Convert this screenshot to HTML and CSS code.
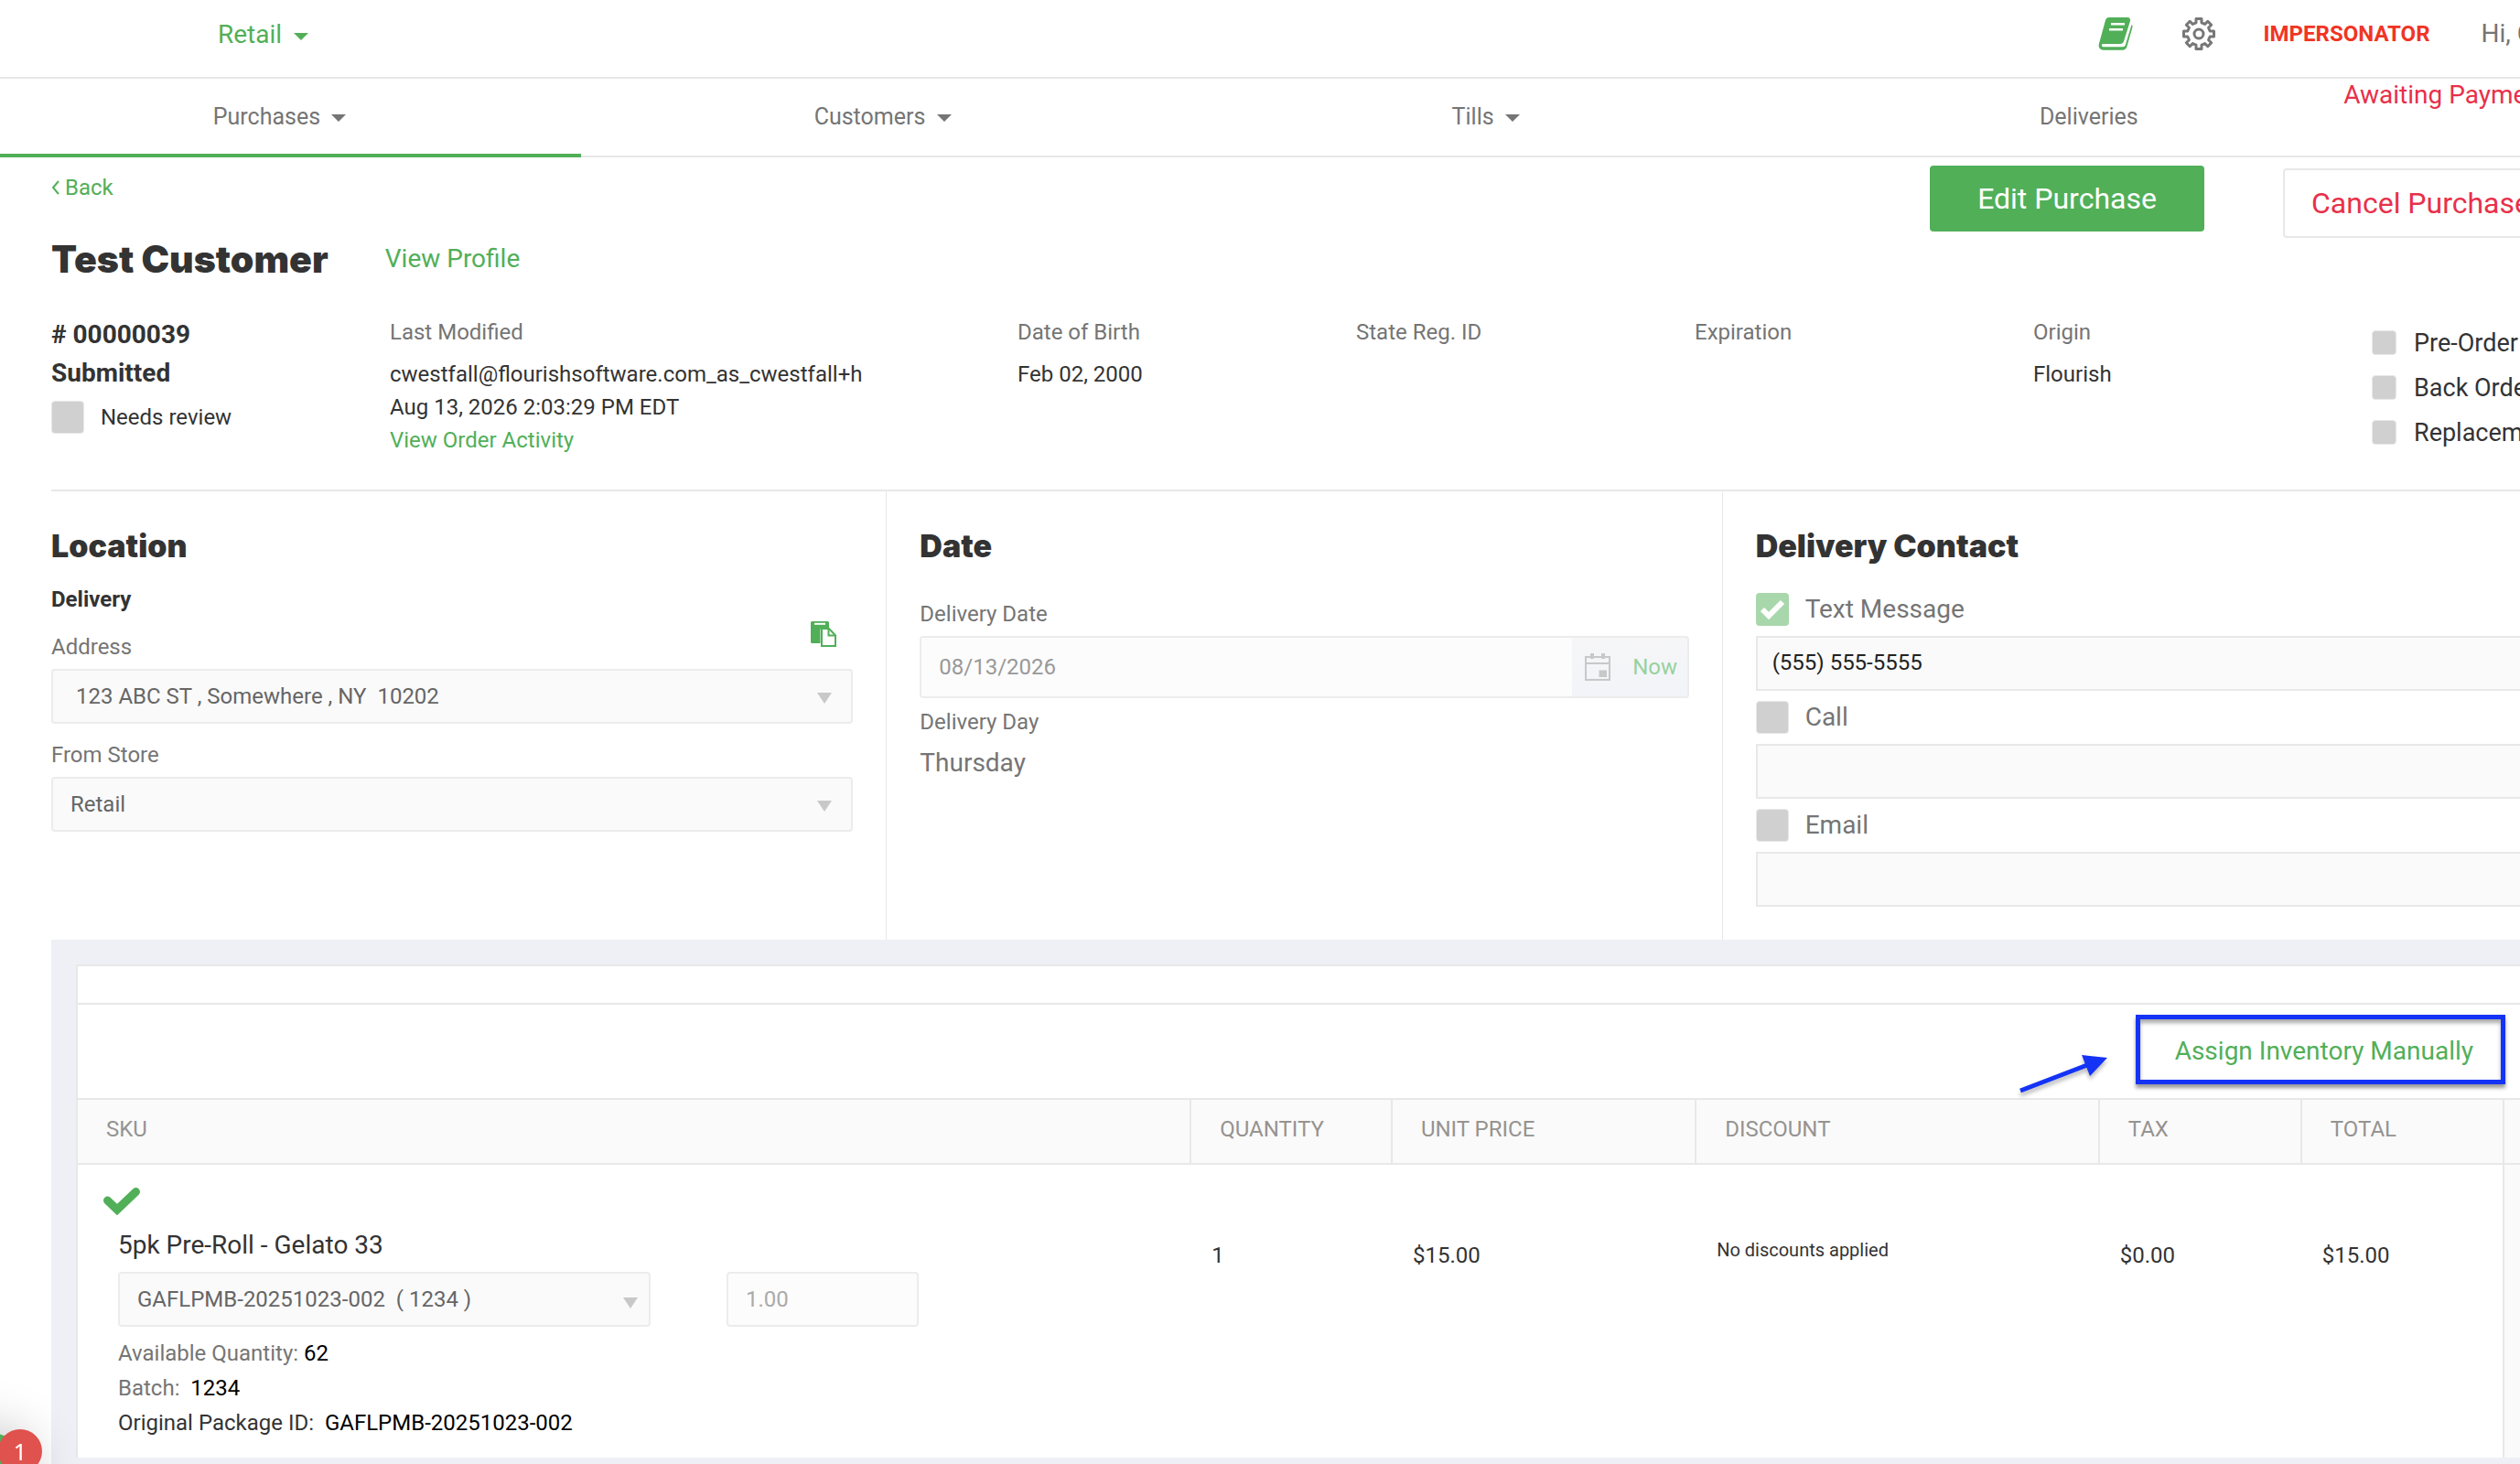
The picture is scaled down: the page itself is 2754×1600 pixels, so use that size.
FILE: index.html
```html
<!DOCTYPE html>
<html lang="en">
<head>
<meta charset="utf-8">
<title>Purchase 00000039</title>
<link rel="stylesheet" href="styles.css">
</head>
<body>
<div class="page">
  <header class="topbar">
    <button class="store-switch" type="button">Retail <span class="caret"></span></button>
    <div class="topbar-right">
      <a href="#" class="book-link" aria-label="Knowledge base">
        <svg width="40" height="38" viewBox="0 0 40 38"><path fill="#51af58" d="M13 1h20c2.500 0 3.500 2 3 4l-7 22c-.6 2-2 3-4 3H7c-1.500 0-2.500.6-2 2 .3 1 1.200 1.200 2 1.200h21c1.400 0 2.400-.8 2.800-2L37.500 9c1 .8 1.300 1.600.9 3l-6 21c-.7 2.400-2.400 3.800-5 3.800H7c-4 0-6-3-5.200-6.500L9 4c.6-2 2-3 4-3z"/><path stroke="#fff" stroke-width="2.400" d="M15 8.200h15M13 14.200h15"/></svg>
      </a>
      <a href="#" class="gear-link" aria-label="Settings">
        <svg width="36" height="36" viewBox="0 0 36 36" fill="none" stroke="#777" stroke-width="3" stroke-linejoin="round"><path d="M15 1.500h6v4.300l3.700 1.600 3.100-3.100 3.900 3.900-3.100 3.100 1.600 3.700h4.300v6h-4.300l-1.600 3.700 3.100 3.100-3.900 3.900-3.100-3.100-3.700 1.600v4.300h-6v-4.300l-3.700-1.600-3.100 3.100-3.900-3.900 3.100-3.100-1.600-3.700H1.500v-6h4.300l1.600-3.700-3.100-3.100 3.900-3.900 3.100 3.100 3.700-1.600z"/><circle cx="18" cy="18" r="5"/></svg>
      </a>
      <strong class="impersonator">IMPERSONATOR</strong>
      <span class="greeting">Hi, C</span>
    </div>
  </header>

  <nav class="tabs">
    <a href="#" class="tab tab-active">Purchases <span class="caret"></span></a>
    <a href="#" class="tab">Customers <span class="caret"></span></a>
    <a href="#" class="tab">Tills <span class="caret"></span></a>
    <a href="#" class="tab">Deliveries</a>
    <span class="payment-status">Awaiting Payment</span>
  </nav>

  <main class="content">
    <div class="title-area">
      <div class="title-left">
        <a href="#" class="back"><svg width="10" height="16" viewBox="0 0 10 16" fill="none" stroke="#51af58" stroke-width="2"><path d="M8 1L2 8l6 7"/></svg>Back</a>
        <div class="customer">
          <h1>Test Customer</h1>
          <a href="#" class="profile">View Profile</a>
        </div>
      </div>
      <div class="actions">
        <button type="button" class="btn btn-primary">Edit Purchase</button>
        <button type="button" class="btn btn-danger">Cancel Purchase</button>
      </div>
    </div>

    <section class="details">
      <div class="order-id">
        <div># 00000039</div>
        <div>Submitted</div>
        <label class="review"><input type="checkbox" class="check" disabled>Needs review</label>
      </div>
      <div class="detail">
        <span class="label">Last Modified</span>
        <div>cwestfall@flourishsoftware.com_as_cwestfall+h</div>
        <div>Aug 13, 2026 2:03:29 PM EDT</div>
        <a href="#">View Order Activity</a>
      </div>
      <div class="detail"><span class="label">Date of Birth</span><div>Feb 02, 2000</div></div>
      <div class="detail"><span class="label">State Reg. ID</span></div>
      <div class="detail"><span class="label">Expiration</span></div>
      <div class="detail"><span class="label">Origin</span><div>Flourish</div></div>
      <div class="flags">
        <label><input type="checkbox" class="check check-small" disabled>Pre-Order</label>
        <label><input type="checkbox" class="check check-small" disabled>Back Order</label>
        <label><input type="checkbox" class="check check-small" disabled>Replacement</label>
      </div>
    </section>

    <div class="columns">
      <section class="column">
        <h2>Location</h2>
        <div class="method">Delivery</div>
        <div class="label-row">
          <label class="label" for="address">Address</label>
          <button type="button" class="paste" aria-label="Copy address">
            <svg width="28" height="28" viewBox="0 0 28 28"><path fill="#51af58" d="M1.500 0h17q1.500 0 1.500 1.500V7h-7q-2.500 0-2.500 2.500V24h-9Q0 24 0 22.500v-21Q0 0 1.500 0z"/><path fill="#fff" d="M4 1.800h12v2H4z"/><path fill="#fff" stroke="#51af58" stroke-width="2" d="M12 8h8l7 7.500V27H12z"/><path fill="none" stroke="#51af58" stroke-width="2" d="M19.500 8v7.500H27"/></svg>
          </button>
        </div>
        <select id="address" class="field field-address" disabled><option>123 ABC ST , Somewhere , NY&nbsp; 10202</option></select>
        <label class="label" for="store">From Store</label>
        <select id="store" class="field" disabled><option>Retail</option></select>
      </section>

      <section class="column">
        <h2>Date</h2>
        <label class="label label-date" for="date">Delivery Date</label>
        <div class="date-group">
          <input id="date" type="text" value="08/13/2026" disabled>
          <button type="button" class="calendar" aria-label="Open calendar" disabled>
            <svg width="28" height="30" viewBox="0 0 28 30"><path fill="none" stroke="#c8c8c8" stroke-width="2" d="M1 4h26v25H1zM1 11h26"/><path fill="#c8c8c8" d="M6 0h4v6H6zM18 0h4v6h-4zM15.500 18.500H24V26h-8.500z"/></svg>
          </button>
          <button type="button" class="now" disabled>Now</button>
        </div>
        <span class="label">Delivery Day</span>
        <div class="weekday">Thursday</div>
      </section>

      <section class="column column-contact">
        <h2>Delivery Contact</h2>
        <label class="contact"><input type="checkbox" class="check check-on" checked disabled>Text Message</label>
        <input type="tel" class="field field-contact" aria-label="Text message number" value="(555) 555-5555" disabled>
        <label class="contact"><input type="checkbox" class="check" disabled>Call</label>
        <input type="tel" class="field field-contact" aria-label="Call number" disabled>
        <label class="contact"><input type="checkbox" class="check" disabled>Email</label>
        <input type="email" class="field field-contact" aria-label="Email address" disabled>
      </section>
    </div>

    <section class="items">
      <div class="card">
        <div class="card-strip"></div>
        <div class="card-tools">
          <svg class="pointer" width="104" height="50" viewBox="0 0 104 50"><path stroke="#1433f5" stroke-width="5" d="M5 43L78 15"/><path fill="#1433f5" d="M72 4l28 3-19 20z"/></svg>
          <button type="button" class="assign">Assign Inventory Manually</button>
        </div>
        <table>
          <colgroup><col class="c-sku"><col class="c-qty"><col class="c-price"><col class="c-discount"><col class="c-tax"><col class="c-total"><col></colgroup>
          <thead>
            <tr><th>SKU</th><th>QUANTITY</th><th>UNIT PRICE</th><th>DISCOUNT</th><th>TAX</th><th>TOTAL</th><th></th></tr>
          </thead>
          <tbody>
            <tr>
              <td class="sku">
                <svg class="tick" width="42" height="32" viewBox="0 0 42 32"><path fill="none" stroke="#51af58" stroke-width="9" stroke-linecap="round" stroke-linejoin="miter" d="M5.500 15L16 25 36.500 5.500"/></svg>
                <div class="product">
                  <div class="product-name">5pk Pre-Roll - Gelato 33</div>
                  <div class="package">
                    <select class="field field-package" aria-label="Package" disabled><option>GAFLPMB-20251023-002&nbsp; ( 1234 )</option></select>
                    <input type="text" class="field field-qty" aria-label="Package quantity" value="1.00" disabled>
                  </div>
                  <div class="fact">Available Quantity: <b>62</b></div>
                  <div class="fact">Batch:&nbsp; <b>1234</b></div>
                  <div class="fact fact-dark">Original Package ID:&nbsp; <b>GAFLPMB-20251023-002</b></div>
                </div>
              </td>
              <td>1</td>
              <td>$15.00</td>
              <td class="discount">No discounts applied</td>
              <td>$0.00</td>
              <td>$15.00</td>
              <td class="row-end"></td>
            </tr>
          </tbody>
        </table>
      </div>
    </section>
  </main>
</div>
<button type="button" class="chat" aria-label="Open chat"></button>
<div class="badge">1</div>
</body>
</html>
```
FILE: styles.css
```css
* { box-sizing: border-box; }

body {
  margin: 0;
  height: 100vh;
  overflow: hidden;
  background: #fff;
  color: #333;
  font: 24px/36px Roboto, sans-serif;
}

a { color: #51af58; text-decoration: none; }
button, input, select { font: inherit; color: inherit; }
button { border: 0; padding: 0; background: none; }
h1, h2 { margin: 0; color: #333; font-family: Inter, sans-serif; font-weight: 900; }

/* the order view is a little wider than the window and runs off its right edge */
.page { width: calc(100% + 98px); }

.caret {
  display: inline-block;
  margin-left: 6px;
  border: 8px solid transparent;
  border-top-color: currentColor;
  border-bottom: 0;
  vertical-align: middle;
}

/* top bar */
.topbar {
  display: flex;
  align-items: center;
  justify-content: space-between;
  height: 86px;
  padding: 0 83px 10px 238px;
  border-bottom: 2px solid #e8e8e8;
}
.store-switch { padding-top: 2px; color: #51af58; font-size: 28px; }
.topbar-right { display: flex; align-items: center; }
.topbar-right svg { display: block; }
.gear-link { margin: 0 53px; }
.impersonator { color: #f03524; }
.greeting { margin-left: 56px; color: #757575; font-size: 28px; }

/* section tabs */
.tabs {
  position: relative;
  display: grid;
  grid-template-columns: repeat(4, 11fr) 4fr;
  height: 86px;
  margin-left: -24px;
  border-bottom: 2px solid #e8e8e8;
}
.tab {
  height: 86px;
  padding-top: 1px;
  color: #757575;
  font-size: 25px;
  line-height: 82px;
  text-align: center;
}
.tab-active { border-bottom: 4px solid #51af58; }
.payment-status {
  position: absolute;
  top: 0;
  right: 66px;
  color: #e8304a;
  font-size: 28px;
}

.content { padding: 0 56px; }

/* title */
.title-area { display: flex; justify-content: space-between; }
.title-left { padding-top: 15px; }
.back { display: flex; align-items: center; gap: 5px; }
.customer { display: flex; align-items: center; gap: 62px; margin-top: 36px; }
h1 { font-size: 41px; line-height: 48px; }
.profile { font-size: 28px; }
.actions { display: flex; align-items: flex-start; gap: 86px; padding-top: 9px; }
.btn { border-radius: 4px; font-size: 32px; }
.btn-primary { width: 300px; height: 72px; background: #51af58; color: #fff; }
.btn-danger {
  height: 76px;
  margin-top: 3px;
  padding: 0 29px;
  border: 2px solid #e8e8e8;
  background: #fff;
  color: #e8304a;
}

/* order details */
.details {
  display: grid;
  grid-template-columns: 370fr 686fr repeat(4, 370fr) 204fr;
  height: 199px;
  margin-top: 31px;
  border-bottom: 2px solid #e8e8e8;
}
.order-id { font-size: 28px; font-weight: 700; line-height: 42px; padding-top: 7px; }
.review { display: flex; align-items: center; gap: 18px; height: 54px; font-size: 24px; font-weight: 400; }
.label { display: block; color: #757575; }
.detail > .label { margin: 7px 0 10px; }
.flags { padding-top: 12px; font-size: 27px; }
.flags label { display: flex; align-items: center; gap: 19px; height: 49px; white-space: nowrap; }

.check {
  flex: none;
  width: 36px;
  height: 36px;
  margin: 0;
  appearance: none;
  border: 1px solid #e8e8e8;
  border-radius: 4px;
  background: #d0d0d0;
}
.check-small { width: 27px; height: 27px; }
.check-on {
  border: 0;
  background: #a8d7ab url("data:image/svg+xml,%3Csvg xmlns='http://www.w3.org/2000/svg' viewBox='0 0 36 36'%3E%3Cpath fill='none' stroke='white' stroke-width='6' d='M7 18l7 7L29 10'/%3E%3C/svg%3E") center / 36px no-repeat;
}

/* three columns */
.columns { display: grid; grid-template-columns: repeat(3, 1fr); height: 490px; }
.column { padding: 35px 36px 0; border-right: 1px solid #e8e8e8; }
.column:first-child { padding-left: 0; }
.column:last-child { border: 0; }
h2 { font-size: 34px; line-height: 50px; }
.method { margin-top: 15px; font-weight: 700; }
.label-row { display: flex; justify-content: space-between; margin-top: 16px; }
.label-row + .field { margin-top: 6px; }
.paste { height: 28px; margin: -10px 18px 0 0; }
.paste svg { display: block; }

.field {
  display: block;
  width: 100%;
  height: 60px;
  padding: 0 19px;
  appearance: none;
  border: 2px solid #ececec;
  border-radius: 4px;
  background: #fafafa;
  color: #666;
  opacity: 1;
}
select.field {
  background: #fafafa url("data:image/svg+xml,%3Csvg xmlns='http://www.w3.org/2000/svg' viewBox='0 0 16 12'%3E%3Cpath fill='%23c8c8c8' d='M0 0h16L8 12z'/%3E%3C/svg%3E") right 21px top 24px / 16px 12px no-repeat;
}
.field-address { padding-left: 25px; }
.column .field + .label { margin: 16px 0 6px; }

.label-date { margin: 31px 0 6px; }
.date-group {
  display: flex;
  height: 68px;
  margin-bottom: 8px;
  border: 2px solid #ececec;
  border-radius: 4px;
  background: linear-gradient(#f6f6f7, #f2f4f9);
}
.date-group input {
  flex: 1;
  min-width: 0;
  padding: 0 19px;
  border: 0;
  background: #fcfcfc;
  color: #999;
}
.calendar { width: 56px; padding: 0; }
.calendar svg { display: block; margin: auto; }
.now { width: 70px; color: #98d19c; }
.weekday { margin-top: 9px; color: #757575; font-size: 28px; }

.column-contact h2 { margin-bottom: 25px; }
.contact { display: flex; align-items: center; gap: 18px; height: 58px; margin-top: -10px; color: #757575; font-size: 28px; }
.field-contact { padding: 0 16px 2px; border-color: #e8e8e8; border-radius: 0; color: #222; }
.field-contact + .contact { margin-top: 0; }

/* items */
.items { padding: 27px 30px 40px 27px; background: #eff0f6; }
.card { border: 2px solid #e8e8e8; border-bottom: 0; background: #fff; }
.card-strip { height: 42px; border-bottom: 2px solid #e8e8e8; }
.card-tools { display: flex; justify-content: flex-end; align-items: flex-start; gap: 27px; height: 102px; padding: 11px 26px 0 0; }
.pointer { margin-top: 40px; overflow: visible; filter: drop-shadow(0 4px 2px #0004); }
.assign {
  width: 404px;
  height: 76px;
  border: 5px solid #1433f5;
  box-shadow: 0 4px 4px #0006, inset 0 4px 4px #0005;
  color: #51af58;
  font-size: 28px;
  text-align: right;
  padding: 3px 30px 0 0;
}

table { width: 100%; table-layout: fixed; border-collapse: collapse; }
.c-sku { width: 45.4%; }
.c-qty { width: 8.2%; }
.c-price { width: 12.4%; }
.c-discount { width: 16.45%; }
.c-tax, .c-total { width: 8.25%; }
th {
  height: 71px;
  padding: 0 0 6px 31px;
  border: 2px solid #e8e8e8;
  border-left-width: 0;
  background: #fafafa;
  color: #969390;
  font-weight: 400;
  text-align: left;
}
th:last-child { border-right: 0; }
td { height: 321px; padding: 81px 0 0 23px; vertical-align: top; }
td.sku { padding: 24px 0 0 27px; }
td.discount { padding-top: 75px; font-size: 20px; }
td.row-end { border-left: 2px solid #e8e8e8; background: #fafafa; }
.tick { display: block; }
.product { padding-left: 17px; }
.product-name { margin: 14px 0 11px; font-size: 28px; }
.package { display: flex; gap: 83px; margin-bottom: 11px; }
.field-package { width: 582px; }
select.field-package { background-position: right 12px top 26px; }
.field-qty { width: 210px; background: #fcfcfc; color: #aaa; }
.fact { height: 38px; color: #757575; }
.fact b { color: #000; font-weight: 400; }
.fact-dark { color: #333; }

/* chat launcher, tucked into the corner, and its unread count */
.chat {
  position: fixed;
  left: -50px;
  bottom: -50px;
  width: 80px;
  height: 84px;
  border-radius: 50%;
  background: #51af58;
  box-shadow: 0 0 60px #0005;
}
.badge {
  position: fixed;
  left: -2px;
  bottom: -10px;
  width: 48px;
  height: 48px;
  border-radius: 50%;
  background: #e0524d;
  color: #fff;
  font: 26px/48px "Noto Sans", sans-serif;
  text-align: center;
}
```
